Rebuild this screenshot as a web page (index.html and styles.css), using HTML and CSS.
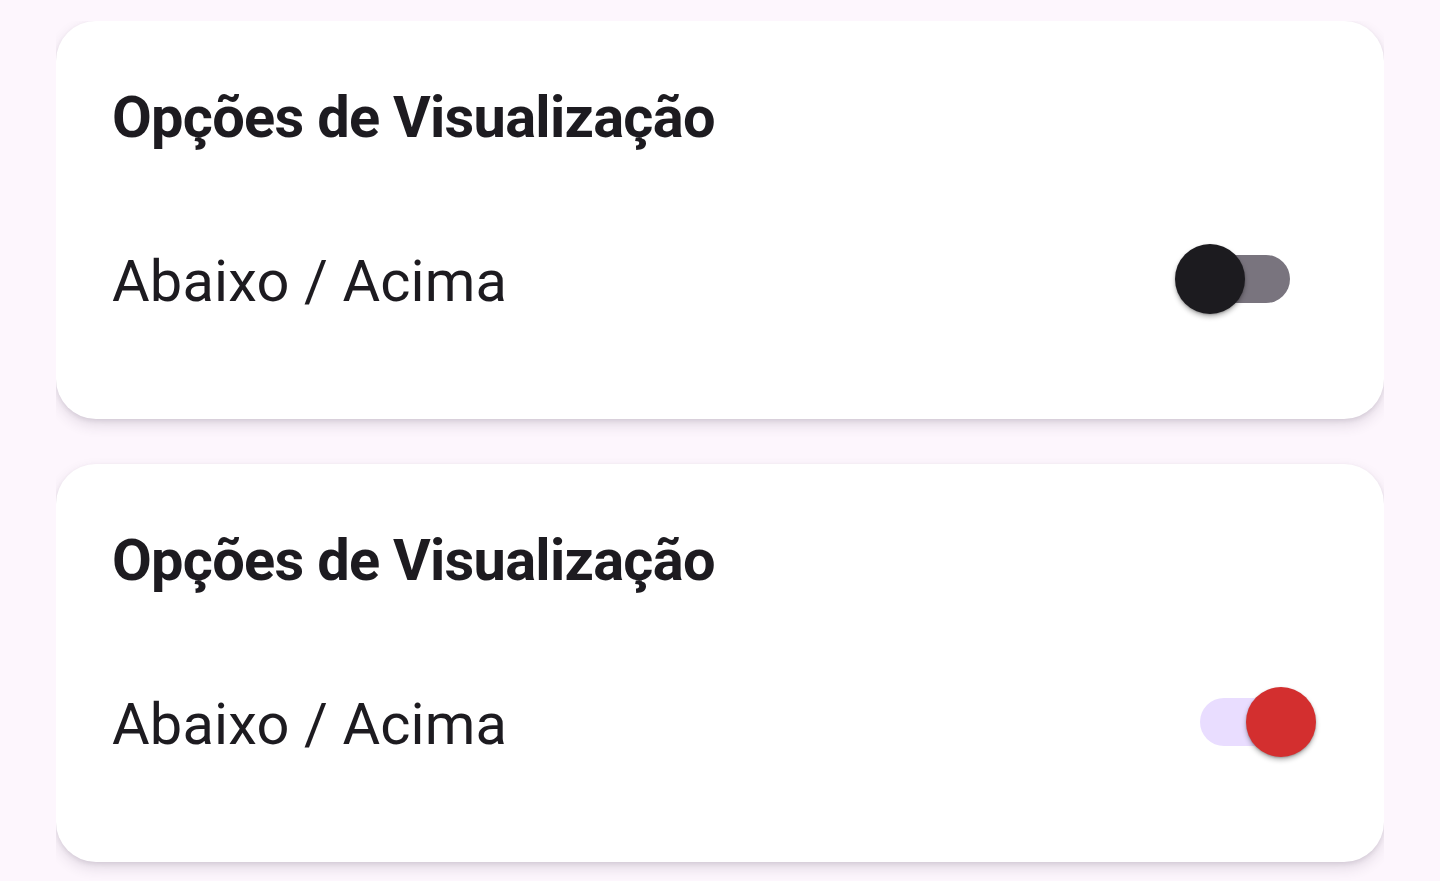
FILE: index.html
```html
<!DOCTYPE html>
<html lang="pt">
<head>
<meta charset="utf-8">
<title>Opções de Visualização</title>
<link rel="stylesheet" href="styles.css">
</head>
<body>
<main class="list">
  <section class="card">
    <h2 class="card-title">Opções de Visualização</h2>
    <div class="row">
      <span class="row-label">Abaixo / Acima</span>
      <span class="switch switch-off" role="switch" aria-checked="false"><span class="thumb"></span></span>
    </div>
  </section>
  <section class="card">
    <h2 class="card-title">Opções de Visualização</h2>
    <div class="row">
      <span class="row-label">Abaixo / Acima</span>
      <span class="switch switch-on" role="switch" aria-checked="true"><span class="thumb"></span></span>
    </div>
  </section>
</main>
</body>
</html>
```
FILE: styles.css
```css
html, body {
  margin: 0;
  padding: 0;
  height: 100%;
}
body {
  background: #fdf6fd;
  font-family: Roboto, "Liberation Sans", sans-serif;
  color: #1d1b20;
  overflow: hidden;
}
.list {
  margin: 21px 0 0 56px;
  width: 1328px;
  height: 860px;
  overflow: hidden;
  display: flex;
  flex-direction: column;
  gap: 45px;
}
.card {
  flex: none;
  background: #ffffff;
  border-radius: 40px;
  padding: 62px 56px 77px 56px;
  box-shadow: 0 6px 14px rgba(60, 40, 70, 0.14), 0 2px 4px rgba(60, 40, 70, 0.10);
  margin: 0;
}
.card-title {
  margin: 0;
  font-size: 57.75px;
  font-weight: 700;
  line-height: 68px;
  letter-spacing: -0.72px;
}
.row {
  margin-top: 65px;
  height: 126px;
  display: flex;
  align-items: center;
  justify-content: space-between;
}
.row-label {
  font-size: 57.75px;
  font-weight: 400;
  line-height: 68px;
  letter-spacing: 0.15px;
  margin-top: 3px;
}
.switch {
  position: relative;
  width: 90px;
  height: 48px;
  border-radius: 24px;
  margin-right: 38px;
}
.switch-off {
  background: #79747e;
}
.switch-on {
  background: #e9ddff;
}
.thumb {
  position: absolute;
  top: -11px;
  width: 70px;
  height: 70px;
  border-radius: 50%;
  box-shadow: 0 3px 5px rgba(0, 0, 0, 0.28), 0 1px 2px rgba(0, 0, 0, 0.2);
}
.switch-off .thumb {
  left: -25px;
  background: #1c1b1f;
}
.switch-on .thumb {
  left: 46px;
  background: #d32f2f;
}
```
